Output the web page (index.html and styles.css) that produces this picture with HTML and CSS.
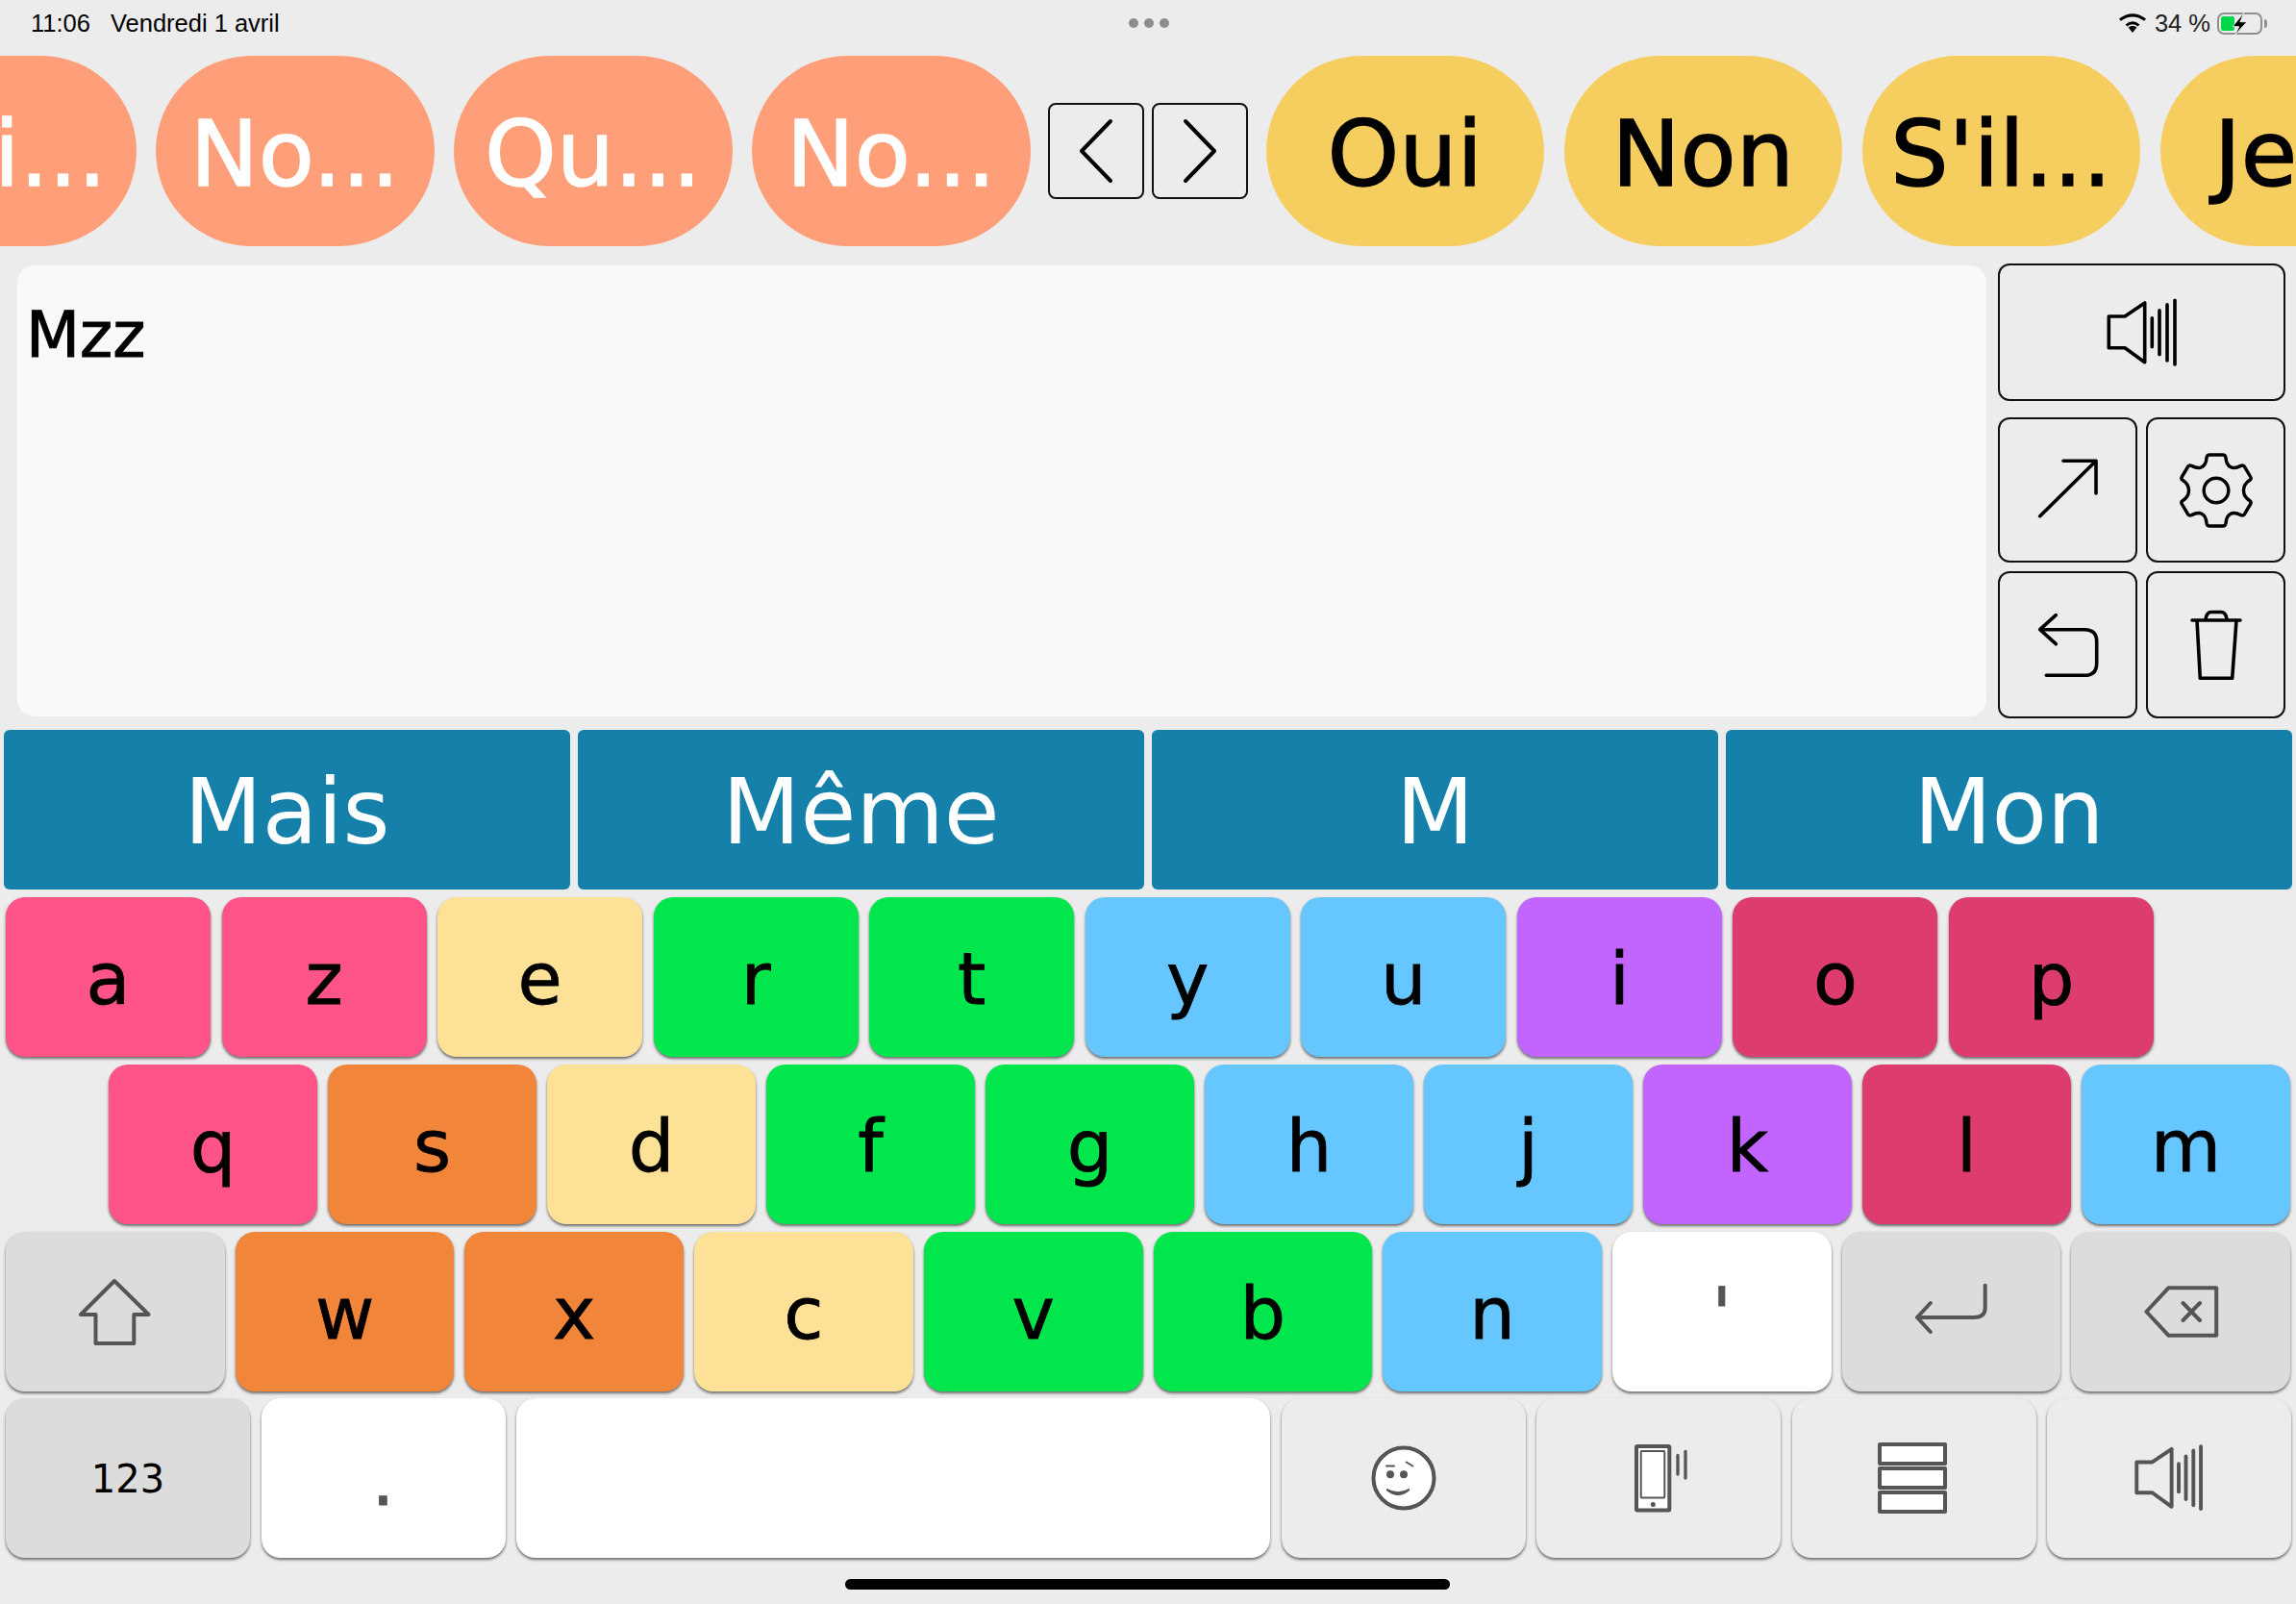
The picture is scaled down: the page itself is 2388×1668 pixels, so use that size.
FILE: index.html
```html
<!DOCTYPE html>
<html lang="fr">
<head>
  <meta charset="UTF-8">
  <meta name="viewport" content="width=device-width, initial-scale=1.0">
  <title>Clavier de communication</title>
  <link rel="stylesheet" href="styles.css">
</head>
<body>

  <div class="status-bar">
    <div class="status-left">
      <span>11:06</span>
      <span>Vendredi 1 avril</span>
    </div>
    <div class="status-dots"><i></i><i></i><i></i></div>
    <div class="status-right">
      <svg class="wifi" viewBox="0 0 28 20">
        <path d="M14 20 L9.6 14.6 Q14 11 18.4 14.6 Z"/>
        <path d="M6.6 11.4 Q14 5.2 21.4 11.4 L19.6 13.6 Q14 9 8.4 13.6 Z"/>
        <path d="M0 5.6 L1.8 7.8 Q14 -1 26.2 7.8 L28 5.6 Q14 -5 0 5.6 Z"/>
      </svg>
      <span>34 %</span>
      <div class="battery">
        <div class="battery-level"></div>
        <svg class="bolt" viewBox="0 0 16 24"><path d="M11.7 0.3 L0 14.7 H6.7 L2.3 23.7 L15 9.7 H8.3 Z"/></svg>
      </div>
      <div class="battery-cap"></div>
    </div>
  </div>

  <div class="phrase-row">
    <div class="pill pill-orange">Lui...</div>
    <div class="pill pill-orange">No...</div>
    <div class="pill pill-orange">Qu...</div>
    <div class="pill pill-orange">No...</div>
    <div class="nav-btns">
      <button class="nav-btn"><svg viewBox="0 0 36 68"><path d="M33 3 L3 34 L33 65"/></svg></button>
      <button class="nav-btn"><svg viewBox="0 0 36 68"><path d="M3 3 L33 34 L3 65"/></svg></button>
    </div>
    <div class="pill pill-yellow">Oui</div>
    <div class="pill pill-yellow">Non</div>
    <div class="pill pill-yellow">S'il...</div>
    <div class="pill pill-yellow">Je...</div>
  </div>

  <div class="editor">
    <div class="text-box">Mzz</div>
    <div class="side-btns">
      <button class="side-btn side-btn-wide">
        <svg class="icon-speak" viewBox="0 0 76 72">
          <path d="M3.3 19 H20 L40.7 5 V66.7 L20 51.7 H3.3 Z"/>
          <path d="M48.3 20.7 V50.7 M56 12.7 V58.7 M64 6.7 V65 M72 2.3 V69"/>
        </svg>
      </button>
      <button class="side-btn">
        <svg class="icon-arrow" viewBox="0 0 66 64"><path d="M3.7 60.7 L62 3.3 M28 3.3 H62 V37"/></svg>
      </button>
      <button class="side-btn">
        <svg class="icon-gear" viewBox="0 0 80 84">
          <path d="M33 3 H47 Q50 3 50.5 6 Q51 14 56 16.5 Q60 18.5 67 15 Q69.5 14 71 16 L77.5 27 Q79 29.5 76.5 31 Q70 35 70 42 Q70 49 76.5 53 Q79 54.5 77.5 57 L71 68 Q69.5 70 67 69 Q60 65.5 56 67.5 Q51 70 50.5 78 Q50 81 47 81 H33 Q30 81 29.5 78 Q29 70 24 67.5 Q20 65.5 13 69 Q10.5 70 9 68 L2.5 57 Q1 54.5 3.5 53 Q10 49 10 42 Q10 35 3.5 31 Q1 29.5 2.5 27 L9 16 Q10.5 14 13 15 Q20 18.5 24 16.5 Q29 14 29.5 6 Q30 3 33 3 Z"/>
          <circle cx="40" cy="42" r="13.5"/>
        </svg>
      </button>
      <button class="side-btn">
        <svg class="icon-back" viewBox="0 0 66 68">
          <path d="M20.3 2.7 L3.7 17.7 L20.3 32.7 M3.7 17.7 H50 Q62.7 17.7 62.7 30 V52.7 Q62.7 65.3 50 65.3 H10.3"/>
        </svg>
      </button>
      <button class="side-btn">
        <svg class="icon-trash" viewBox="0 0 54 75">
          <path d="M2 12 H52 M16 11 Q17 3.5 22 3.5 H32 Q37 3.5 38 11 M7 12 L10.3 72.3 H43.7 L48 12"/>
        </svg>
      </button>
    </div>
  </div>

  <div class="keyboard">
    <div class="suggestions">
      <div class="suggestion">Mais</div>
      <div class="suggestion">Même</div>
      <div class="suggestion">M</div>
      <div class="suggestion">Mon</div>
    </div>

    <div class="key-row key-row-1">
      <div class="key pink">a</div>
      <div class="key pink">z</div>
      <div class="key yellow">e</div>
      <div class="key green">r</div>
      <div class="key green">t</div>
      <div class="key blue">y</div>
      <div class="key blue">u</div>
      <div class="key purple">i</div>
      <div class="key crimson">o</div>
      <div class="key crimson">p</div>
    </div>

    <div class="key-row key-row-2">
      <div class="key pink">q</div>
      <div class="key orange">s</div>
      <div class="key yellow">d</div>
      <div class="key green">f</div>
      <div class="key green">g</div>
      <div class="key blue">h</div>
      <div class="key blue">j</div>
      <div class="key purple">k</div>
      <div class="key crimson">l</div>
      <div class="key blue">m</div>
    </div>

    <div class="key-row">
      <div class="key grey icon-key">
        <svg class="kb-shift" viewBox="0 0 75 71"><path d="M37 3 L2 38 H17.5 V68 H57.3 V38 H72.6 Z"/></svg>
      </div>
      <div class="key orange">w</div>
      <div class="key orange">x</div>
      <div class="key yellow">c</div>
      <div class="key green">v</div>
      <div class="key green">b</div>
      <div class="key blue">n</div>
      <div class="key white punct">'</div>
      <div class="key grey icon-key">
        <svg class="kb-return" viewBox="0 0 77 54"><path d="M73.7 2.7 V26 Q73.7 36 62 36 H3 M16.8 21 L3 36 L16.8 51"/></svg>
      </div>
      <div class="key grey icon-key">
        <svg class="kb-delete" viewBox="0 0 78 54"><path d="M2.4 27 L25.3 2.3 H75.2 V51.7 H25.3 Z M40.5 18 L58 36 M58 18 L40.5 36"/></svg>
      </div>
    </div>

    <div class="key-row key-row-4">
      <div class="key grey key-num">123</div>
      <div class="key white punct">.</div>
      <div class="key white key-space"></div>
      <div class="key light icon-key">
        <svg class="kb-emoji" viewBox="0 0 70 70">
          <circle class="face" cx="35" cy="35" r="31.5"/>
          <path class="thin" d="M17 22.5 H25 M37.7 18.5 L44.3 22.5"/>
          <circle class="solid" cx="21" cy="31.2" r="4"/>
          <circle class="solid" cx="35" cy="31.2" r="4"/>
          <path class="solid" d="M17 45.8 Q29 52.6 41 45.8 V48 Q29 58 17 48 Z"/>
        </svg>
      </div>
      <div class="key light icon-key">
        <svg class="kb-phone" viewBox="0 0 58 75">
          <rect class="white-fill" x="4" y="4" width="34.3" height="66.6" rx="1"/>
          <rect class="white-fill thin" x="8.7" y="9" width="24.6" height="48.6" rx="1"/>
          <circle class="solid" cx="21.3" cy="64.6" r="2.5"/>
          <path class="bars" d="M47 13.3 V33 M55 9.3 V37"/>
        </svg>
      </div>
      <div class="key light icon-key">
        <svg class="kb-rows" viewBox="0 0 72 74">
          <rect class="white-fill" x="2" y="2" width="68" height="20"/>
          <rect class="white-fill" x="2" y="27" width="68" height="20"/>
          <rect class="white-fill" x="2" y="52" width="68" height="20"/>
        </svg>
      </div>
      <div class="key light icon-key">
        <svg class="kb-speak" viewBox="0 0 76 72">
          <path d="M3.3 19 H20 L40.7 5 V66.7 L20 51.7 H3.3 Z"/>
          <path d="M48.3 20.7 V50.7 M56 12.7 V58.7 M64 6.7 V65 M72 2.3 V69"/>
        </svg>
      </div>
    </div>
  </div>

  <div class="home-bar"></div>

</body>
</html>
```

FILE: styles.css
```css
body, html {
  margin: 0;
  padding: 0;
  width: 2388px;
  height: 1668px;
  overflow: hidden;
  font-family: 'DejaVu Sans', sans-serif;
  background-color: #ececec;
  color: #000;
}

svg {
  display: block;
  fill: none;
  stroke-linecap: round;
  stroke-linejoin: round;
}

button {
  display: flex;
  align-items: center;
  justify-content: center;
  padding: 0;
  background: transparent;
  box-sizing: border-box;
}

/* status bar */
.status-bar {
  height: 46px;
  padding: 2px 30px 0 32px;
  box-sizing: border-box;
  display: flex;
  align-items: center;
  justify-content: space-between;
  font-family: 'Liberation Sans', sans-serif;
  font-size: 25.5px;
}

.status-left {
  display: flex;
  gap: 21px;
  width: 500px;
}

.status-dots {
  display: flex;
  gap: 6px;
}

.status-dots i {
  width: 10px;
  height: 10px;
  border-radius: 50%;
  background: #8e8e8e;
}

.status-right {
  width: 500px;
  display: flex;
  align-items: center;
  justify-content: flex-end;
  color: #222;
}

.wifi {
  width: 28px;
  height: 20px;
  margin-right: 9px;
  fill: #000;
}

.battery {
  position: relative;
  width: 47px;
  height: 23px;
  margin-left: 7px;
  border: 2px solid #8f8f8f;
  border-radius: 7px;
  box-sizing: border-box;
}

.battery-level {
  width: 14px;
  height: 15px;
  margin: 2px;
  background: #00d84a;
  border-radius: 2px;
}

.bolt {
  position: absolute;
  left: 14px;
  top: -2px;
  width: 16px;
  height: 24px;
  fill: #000;
  stroke: #ececec;
  stroke-width: 1;
}

.battery-cap {
  width: 3px;
  height: 9px;
  margin-left: 2px;
  background: #8f8f8f;
  border-radius: 0 3px 3px 0;
}

/* phrases */
.phrase-row {
  margin-top: 12px;
  height: 198px;
  display: flex;
  align-items: center;
  justify-content: center;
  gap: 20.5px;
  overflow: hidden;
}

.pill {
  flex: none;
  width: 289.5px;
  height: 198px;
  border-radius: 99px;
  display: flex;
  align-items: center;
  justify-content: center;
  font-size: 95px;
  -webkit-text-stroke: 1.5px currentColor;
  padding-top: 6px;
  box-sizing: border-box;
  white-space: nowrap;
}

.pill-orange {
  background: #ff9f79;
  color: #fff;
}

.pill-yellow {
  background: #f6ce60;
  color: #000;
}

.nav-btns {
  flex: none;
  display: flex;
  gap: 8px;
  margin: 0 -2px;
}

.nav-btn {
  width: 100px;
  height: 100px;
  border: 2px solid #111;
  border-radius: 8px;
}

.nav-btn svg {
  width: 36px;
  height: 68px;
  stroke: #000;
  stroke-width: 4;
}

/* message area */
.editor {
  margin-top: 18px;
  padding: 0 11px 0 18px;
  height: 473px;
  display: flex;
  gap: 12px;
}

.text-box {
  flex: 1;
  margin: 2px 0;
  padding: 35px 9px;
  background: #f9f9f9;
  border-radius: 18px;
  font-size: 65px;
  -webkit-text-stroke: 1px #000;
}

.side-btns {
  width: 299px;
  display: grid;
  grid-template-columns: 145px 145px;
  grid-template-rows: 151px 151px 153px;
  gap: 9px;
}

.side-btn {
  border: 2px solid #111;
  border-radius: 12px;
}

.side-btn svg {
  stroke: #000;
  stroke-width: 3.6;
}

.side-btn-wide {
  grid-column: span 2;
  margin-bottom: 8px;
}

.icon-speak { width: 76px; height: 72px; }
.icon-arrow { width: 66px; height: 64px; margin-bottom: 4px; }
.icon-gear { width: 76px; height: 80px; }
.icon-back { width: 66px; height: 68px; }
.icon-trash { width: 54px; height: 75px; }

/* keyboard */
.keyboard {
  margin-top: 12px;
  padding: 0 6px;
  display: flex;
  flex-direction: column;
  gap: 8px;
}

.suggestions {
  margin: 0 -2px;
  display: flex;
  gap: 8px;
}

.suggestion {
  flex: 1;
  height: 166px;
  padding-top: 4px;
  box-sizing: border-box;
  display: flex;
  align-items: center;
  justify-content: center;
  background: #1580aa;
  border-radius: 6px;
  color: #fff;
  font-size: 94px;
}

.key-row {
  display: flex;
  gap: 11px;
}

.key-row-1 {
  gap: 11.5px;
  padding-right: 142px;
}

.key-row-2 {
  padding-left: 107px;
}

.key-row-4 {
  margin-top: -1px;
}

.key {
  flex: 1;
  height: 166px;
  box-sizing: border-box;
  padding-top: 4px;
  display: flex;
  align-items: center;
  justify-content: center;
  border-radius: 20px;
  box-shadow: 0 2px 3px rgba(0, 0, 0, 0.55);
  font-size: 75px;
  -webkit-text-stroke: 0.8px currentColor;
}

.key-row-4 .key {
  flex: none;
  width: 254px;
  margin-right: 0.5px;
}

.key-row-4 .key-space {
  width: 784px;
}

.icon-key {
  padding-top: 0;
}

.pink { background: #ff5487; }
.orange { background: #f1863b; }
.yellow { background: #fde197; }
.green { background: #00e64c; }
.blue { background: #66c6ff; }
.purple { background: #c265ff; }
.crimson { background: #dc3c6e; }
.white { background: #fff; }
.grey { background: #dcdcdc; }
.light { background: #ececec; }

.punct {
  color: #555;
}

.key-num {
  font-size: 40px;
  -webkit-text-stroke: 0;
  padding-top: 2px;
}

.icon-key svg {
  stroke: #555;
  stroke-width: 4;
}

.icon-key .solid {
  fill: #555;
  stroke: none;
}

.icon-key .thin {
  stroke-width: 2;
}

.icon-key .bars {
  stroke-width: 3.3;
}

.icon-key .white-fill,
.icon-key .face {
  fill: #fff;
}

.kb-shift { width: 75px; height: 71px; }
.kb-return { width: 77px; height: 54px; margin-bottom: 6px; }
.kb-delete { width: 78px; height: 54px; margin-left: 2px; }
.kb-emoji { width: 70px; height: 70px; }
.kb-phone { width: 58px; height: 75px; margin-left: 3px; }
.kb-rows { width: 72px; height: 74px; margin-right: 4px; }
.kb-speak { width: 74px; height: 70px; }

.home-bar {
  position: absolute;
  left: 879px;
  top: 1642px;
  width: 629px;
  height: 11px;
  border-radius: 6px;
  background: #000;
}
```
